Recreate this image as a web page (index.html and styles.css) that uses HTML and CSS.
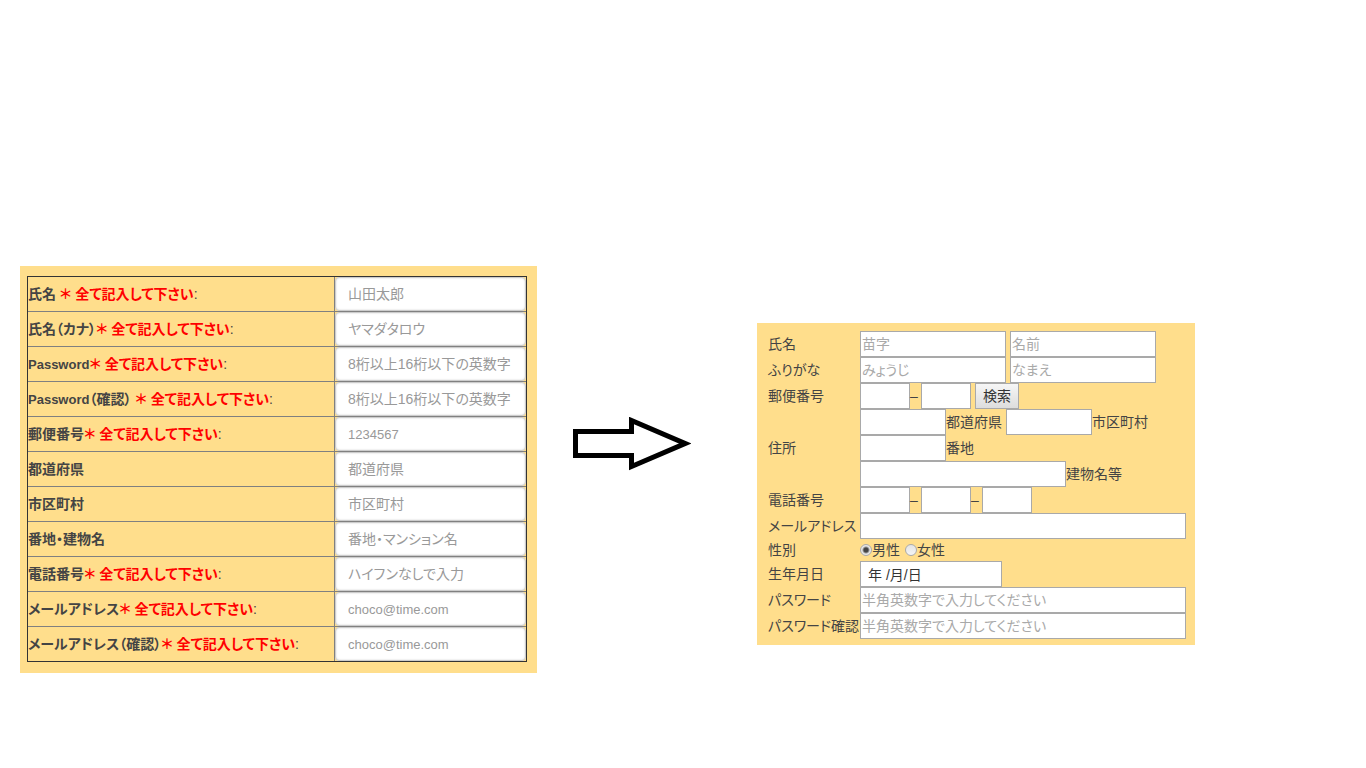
FILE: index.html
```html
<!DOCTYPE html>
<html lang="ja">
<head>
<meta charset="utf-8">
<title>会員登録フォーム</title>
<link rel="stylesheet" href="styles.css">
</head>
<body>
<main class="compare">
  <form class="panel before">
    <table class="entry">
      <tr><th scope="row"><label for="b1">氏名 <span class="req">＊ 全て記入して下さい</span><span class="colon">:</span></label></th><td><input id="b1" type="text" placeholder="山田太郎"></td></tr>
      <tr><th scope="row"><label for="b2">氏名（カナ）<span class="req">＊ 全て記入して下さい</span><span class="colon">:</span></label></th><td><input id="b2" type="text" placeholder="ヤマダタロウ"></td></tr>
      <tr><th scope="row"><label for="b3"><span class="latin">Password</span><span class="req">＊ 全て記入して下さい</span><span class="colon">:</span></label></th><td><input id="b3" type="password" placeholder="8桁以上16桁以下の英数字"></td></tr>
      <tr><th scope="row"><label for="b4"><span class="latin">Password</span>（確認） <span class="req">＊ 全て記入して下さい</span><span class="colon">:</span></label></th><td><input id="b4" type="password" placeholder="8桁以上16桁以下の英数字"></td></tr>
      <tr><th scope="row"><label for="b5">郵便番号<span class="req">＊ 全て記入して下さい</span><span class="colon">:</span></label></th><td><input id="b5" class="latin" type="text" placeholder="1234567"></td></tr>
      <tr><th scope="row"><label for="b6">都道府県</label></th><td><input id="b6" type="text" placeholder="都道府県"></td></tr>
      <tr><th scope="row"><label for="b7">市区町村</label></th><td><input id="b7" type="text" placeholder="市区町村"></td></tr>
      <tr><th scope="row"><label for="b8">番地・建物名</label></th><td><input id="b8" type="text" placeholder="番地・マンション名"></td></tr>
      <tr><th scope="row"><label for="b9">電話番号<span class="req">＊ 全て記入して下さい</span><span class="colon">:</span></label></th><td><input id="b9" type="text" placeholder="ハイフンなしで入力"></td></tr>
      <tr><th scope="row"><label for="b10">メールアドレス<span class="req">＊ 全て記入して下さい</span><span class="colon">:</span></label></th><td><input id="b10" class="latin" type="text" placeholder="choco@time.com"></td></tr>
      <tr><th scope="row"><label for="b11">メールアドレス（確認）<span class="req">＊ 全て記入して下さい</span><span class="colon">:</span></label></th><td><input id="b11" class="latin" type="text" placeholder="choco@time.com"></td></tr>
    </table>
  </form>

  <svg class="arrow" viewBox="0 0 118 54" aria-hidden="true">
    <path d="M2.500 14.500H58.500V3.500L112 26.500L58.500 49.500V38.500H2.500Z" fill="#fff" stroke="#000" stroke-width="5"/>
  </svg>

  <form class="panel after">
    <label for="sei">氏名</label>
    <div class="line spaced"><input id="sei" class="w-name" type="text" placeholder="苗字"><input class="w-name" type="text" placeholder="名前" aria-label="名前"></div>
    <label for="sei-k">ふりがな</label>
    <div class="line spaced"><input id="sei-k" class="w-name" type="text" placeholder="みょうじ"><input class="w-name" type="text" placeholder="なまえ" aria-label="なまえ"></div>
    <label for="zip">郵便番号</label>
    <div class="line"><input id="zip" class="w-num" type="text"><span class="dash">–</span><input class="w-num" type="text" aria-label="郵便番号 下4桁"><button class="search" type="button">検索</button></div>
    <span class="group">住所</span>
    <div class="address">
      <div class="line"><input id="pref" class="w-area" type="text"><label class="pref" for="pref">都道府県</label><input id="city" class="w-area" type="text"><label for="city">市区町村</label></div>
      <div class="line"><input id="street" class="w-area" type="text"><label for="street">番地</label></div>
      <div class="line"><input id="bldg" class="w-bldg" type="text"><label for="bldg">建物名等</label></div>
    </div>
    <label for="tel">電話番号</label>
    <div class="line"><input id="tel" class="w-num" type="text"><span class="dash">–</span><input class="w-num" type="text" aria-label="市内局番"><span class="dash">–</span><input class="w-num" type="text" aria-label="加入者番号"></div>
    <label for="mail">メールアドレス</label>
    <div class="line"><input id="mail" class="w-full" type="text"></div>
    <span class="group">性別</span>
    <div class="line gender"><input id="m" class="radio" type="radio" name="sex" checked><label for="m">男性</label><input id="f" class="radio" type="radio" name="sex"><label for="f">女性</label></div>
    <label for="birth">生年月日</label>
    <div class="line"><input id="birth" class="w-date" type="text" value="年 /月/日"></div>
    <label for="pw">パスワード</label>
    <div class="line"><input id="pw" class="w-full" type="password" placeholder="半角英数字で入力してください"></div>
    <label for="pw2">パスワード確認</label>
    <div class="line"><input id="pw2" class="w-full" type="password" placeholder="半角英数字で入力してください"></div>
  </form>
</main>
</body>
</html>
```
FILE: styles.css
```css
* { box-sizing: border-box; }

body {
  margin: 0;
  background: #fff;
  color: #444;
  font: 14px/20px "Liberation Sans", "Noto Sans CJK JP", sans-serif;
  font-feature-settings: "palt";
}

input, button {
  margin: 0;
  font: inherit;
  font-feature-settings: inherit;
  color: #333;
}

.compare {
  display: flex;
  align-items: flex-start;
  padding: 266px 20px 0;
}

.panel { background: #ffde8c; }

.before {
  flex: 0 1 517px;
  padding: 10px 10px 11px 7px;
}

.entry {
  width: 100%;
  table-layout: fixed;
  border: 1px solid #333;
  border-collapse: separate;
  border-spacing: 0;
}
.entry th, .entry td {
  height: 35px;
  padding: 0;
  text-align: left;
  white-space: nowrap;
}
.entry tr:first-child th, .entry tr:first-child td { height: 34px; }
.entry tr + tr th, .entry tr + tr td { border-top: 1px solid #808080; }
.entry td {
  width: 192px;
  border-left: 1px solid #808080;
}
.entry label { display: block; }
.req { color: #f00; }
.colon { font-weight: 400; }
.entry input {
  display: block;
  width: 100%;
  height: 34px;
  padding: 0 12px;
  border: 1px solid #ccc;
  border-radius: 4px;
  background: #fff;
  box-shadow: inset 0 0 2px #ccc;
}
.entry input::placeholder { color: #999; }
.entry .latin { font-size: 13px; }

.arrow {
  flex: none;
  width: 118px;
  height: 54px;
  margin: 151px 66px 0 36px;
}

.after {
  display: grid;
  flex: 0 1 438px;
  grid-template-columns: 92px 1fr;
  align-items: center;
  margin-top: 57px;
  padding: 8px 9px 6px 11px;
  white-space: nowrap;
}
.line {
  display: flex;
  align-items: center;
  height: 26px;
}
.spaced { gap: 4px; }
.line input:not(.radio) {
  height: 26px;
  padding: 0 1px;
  border: 1px solid #a9a9a9;
  background: #fff;
}
.line input::placeholder { color: #a9a9a9; }
.w-name { width: 146px; }
.w-num { width: 50px; }
.w-area { width: 86px; }
.w-bldg { width: 206px; }
.w-full { width: 100%; }
.line input.w-date:not(.radio) { width: 142px; padding-left: 7px; }
.dash { width: 11px; }
.pref { width: 60px; }

.search {
  width: 44px;
  height: 26px;
  margin-left: 4px;
  padding: 0;
  border: 1px solid #a9a9a9;
  background: linear-gradient(#f6f6f6, #ddd);
}

.line.gender { height: 22px; }
.radio {
  appearance: none;
  width: 12px;
  height: 12px;
  border: 1px solid #aaa;
  border-radius: 50%;
  background: linear-gradient(#e4e4e4, #f4f4f4);
}
.radio:checked { background: radial-gradient(circle, #444 0 2px, #e8e8e8 4px); }
.gender label + .radio { margin-left: 5px; }
```
